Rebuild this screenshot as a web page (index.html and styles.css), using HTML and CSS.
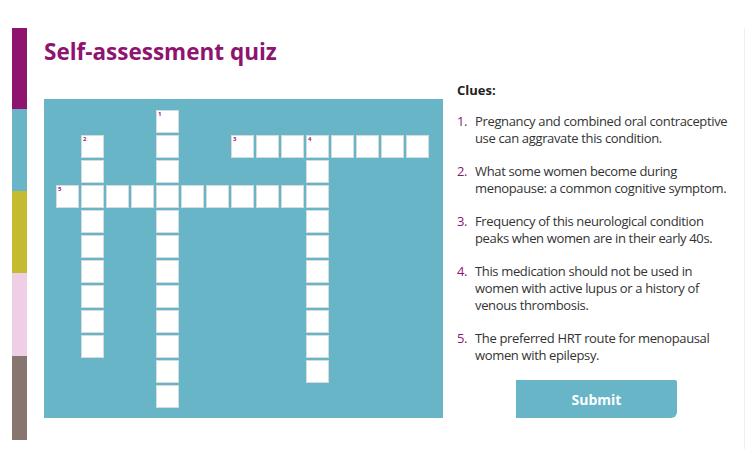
FILE: index.html
```html
<!DOCTYPE html>
<html lang="en">
<head>
    <meta charset="UTF-8">
    <meta name="viewport" content="width=device-width, initial-scale=1.0">
    <title>Self-assessment quiz</title>
    <link rel="stylesheet" href="styles.css">
</head>
<body>
    <div class="frame">
        <div class="stripe">
            <span class="plum"></span>
            <span class="teal"></span>
            <span class="olive"></span>
            <span class="pink"></span>
            <span class="taupe"></span>
        </div>

        <div class="main">
            <h1>Self-assessment quiz</h1>
            <div class="board">
                <div class="grid" id="grid"></div>
            </div>
        </div>

        <div class="clues">
            <h2>Clues:</h2>
            <ol>
                <li><span class="num">1.</span><span>Pregnancy and combined oral contraceptive use can aggravate this condition.</span></li>
                <li><span class="num">2.</span><span>What some women become during menopause: a common cognitive symptom.</span></li>
                <li><span class="num">3.</span><span>Frequency of this neurological condition peaks when women are in their early 40s.</span></li>
                <li><span class="num">4.</span><span>This medication should not be used in women with active lupus or a history of venous thrombosis.</span></li>
                <li><span class="num">5.</span><span>The preferred HRT route for menopausal women with epilepsy.</span></li>
            </ol>
            <button type="button" class="submit">Submit</button>
        </div>
    </div>

    <script>
        // word starts: number, row, col, length, direction
        const words = [
            { n: 1, row: 0, col: 4, len: 12, down: true },
            { n: 2, row: 1, col: 1, len: 9, down: true },
            { n: 3, row: 1, col: 7, len: 8, down: false },
            { n: 4, row: 1, col: 10, len: 10, down: true },
            { n: 5, row: 3, col: 0, len: 11, down: false }
        ];

        const grid = document.getElementById('grid');
        const cells = {};

        words.forEach(function(w) {
            for (let i = 0; i < w.len; i++) {
                const r = w.down ? w.row + i : w.row;
                const c = w.down ? w.col : w.col + i;
                const key = r + '-' + c;
                if (!cells[key]) {
                    cells[key] = { r: r, c: c, n: null };
                }
                if (i === 0) cells[key].n = w.n;
            }
        });

        Object.values(cells).forEach(function(cell) {
            const box = document.createElement('div');
            box.className = 'cell';
            box.style.gridRow = cell.r + 1;
            box.style.gridColumn = cell.c + 1;

            if (cell.n) {
                const label = document.createElement('span');
                label.className = 'cell-num';
                label.textContent = cell.n;
                box.appendChild(label);
            }

            const input = document.createElement('input');
            input.type = 'text';
            input.maxLength = 1;
            box.appendChild(input);
            grid.appendChild(box);
        });
    </script>
</body>
</html>
```

FILE: styles.css
```css
body {
    font-family: "Open Sans", Arial, sans-serif;
    background-color: #fff;
    color: #333;
    margin: 0;
}
.frame {
    display: flex;
    width: 744px;
    height: 421px;
    margin-top: 28px;
    border-right: 1px solid #eceef7;
}
.stripe {
    display: flex;
    flex-direction: column;
    width: 15px;
    height: 412px;
    margin-left: 12px;
}
.plum { height: 81px; background-color: #8e1470; }
.teal { height: 82px; background-color: #68b5c8; }
.olive { height: 82px; background-color: #c5bb30; }
.pink { height: 83px; background-color: #efcfe6; }
.taupe { height: 84px; background-color: #87756f; }

.main {
    margin-left: 17px;
    width: 399px;
}
h1 {
    margin: 10px 0 0;
    font-size: 22.5px;
    line-height: 28px;
    font-weight: 700;
    color: #8e1470;
}
.board {
    margin-top: 33px;
    width: 399px;
    height: 319px;
    background-color: #68b5c8;
    box-sizing: border-box;
    padding: 11px 0 0 12px;
}
.grid {
    display: grid;
    grid-template-columns: repeat(15, 23px);
    grid-template-rows: repeat(12, 23px);
    gap: 2px;
}
.cell {
    position: relative;
    background-color: #fff;
    border: 1px solid #d3dcdf;
    box-sizing: border-box;
}
.cell input {
    width: 100%;
    height: 100%;
    border: none;
    padding: 0;
    background: transparent;
    text-align: center;
    font-family: inherit;
    font-size: 12px;
    text-transform: uppercase;
    outline: none;
}
.cell-num {
    position: absolute;
    top: 0;
    left: 1px;
    font-size: 6px;
    line-height: 7px;
    font-weight: 700;
    color: #9a1a80;
}

.clues {
    margin-left: 14px;
    width: 274px;
}
h2 {
    margin: 53px 0 0;
    font-size: 13px;
    line-height: 18px;
    font-weight: 700;
    color: #222;
}
ol {
    list-style: none;
    margin: 14px 0 0;
    padding: 0;
}
li {
    display: flex;
    font-size: 13px;
    line-height: 17px;
    letter-spacing: -0.35px;
    margin-bottom: 16px;
}
.num {
    flex: 0 0 18px;
    color: #8e1470;
}
.submit {
    display: block;
    margin: 16px 0 0 59px;
    width: 161px;
    height: 38px;
    border: none;
    border-radius: 0 2px 6px 0;
    background-color: #68b5c8;
    color: #fff;
    font-family: inherit;
    font-size: 14px;
    font-weight: 700;
    cursor: pointer;
}
```
